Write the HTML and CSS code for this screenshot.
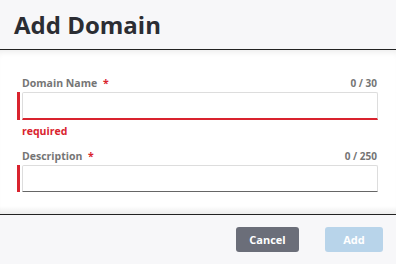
FILE: index.html
```html
<html>
<head>
<link rel="stylesheet" href="styles.css">
</head>
<body>
<div class="dialog">
    <div class="dialog-header">
        <h2>Add Domain</h2>
    </div>
    <div class="dialog-body">
        <div class="field invalid">
            <div class="field-top">
                <label for="domain-name">Domain Name <span class="req">*</span></label>
                <span class="counter">0 / 30</span>
            </div>
            <div class="input-wrap">
                <input type="text" id="domain-name">
            </div>
            <div class="error">required</div>
        </div>
        <div class="field">
            <div class="field-top">
                <label for="description">Description <span class="req">*</span></label>
                <span class="counter">0 / 250</span>
            </div>
            <div class="input-wrap">
                <input type="text" id="description">
            </div>
        </div>
    </div>
    <div class="dialog-footer">
        <button class="btn cancel">Cancel</button>
        <button class="btn add" disabled>Add</button>
    </div>
</div>
</body>
</html>
```

FILE: styles.css
```css
body {
    margin: 0;
    font-family: "Open Sans", "Noto Sans", sans-serif;
    color: #2b2d33;
    background: #fff;
}

.dialog {
    width: 396px;
    height: 264px;
    display: flex;
    flex-direction: column;
}

.dialog-header {
    height: 50px;
    background: #f7f7f9;
    border-bottom: 1px solid #222;
    box-sizing: border-box;
    padding: 0 14px;
    display: flex;
    align-items: center;
}

.dialog-header h2 {
    margin: 0;
    font-size: 24px;
    font-weight: 700;
    color: #2b2d33;
}

.dialog-body {
    flex: 1;
    padding: 26px 18px 0 17px;
    box-shadow: inset 0 6px 6px -4px rgba(0, 0, 0, 0.08);
    border-bottom: 1px solid #222;
    position: relative;
}

.dialog-body::after {
    content: "";
    position: absolute;
    left: 0;
    right: 0;
    bottom: 0;
    height: 8px;
    background: linear-gradient(to bottom, rgba(0, 0, 0, 0), rgba(0, 0, 0, 0.07));
}

.field-top {
    display: flex;
    justify-content: space-between;
    align-items: center;
    height: 14px;
    margin-bottom: 2px;
    padding-left: 5px;
}

label {
    font-size: 10.5px;
    font-weight: 700;
    color: #757575;
}

.req {
    color: #d9232e;
    margin-left: 3px;
}

.counter {
    font-size: 10px;
    font-weight: 700;
    color: #757575;
    padding-right: 1px;
}

.input-wrap {
    border-left: 3px solid #d9232e;
    padding-left: 2px;
    display: flex;
}

input[type='text'] {
    display: block;
    width: 100%;
    height: 27px;
    box-sizing: border-box;
    border: 1px solid #ddd;
    border-bottom: 1px solid #666;
    border-radius: 2px 2px 0 0;
    outline: none;
    font: 12px "Open Sans", sans-serif;
    padding: 4px 6px;
}

.invalid input[type='text'] {
    height: 28px;
    border-bottom: 2px solid #d9232e;
}

.error {
    font-size: 10.5px;
    font-weight: 700;
    color: #d9232e;
    margin: 4px 0 11px 0;
    padding-left: 5px;
}

.dialog-footer {
    height: 49px;
    background: #f7f7f9;
    display: flex;
    justify-content: flex-end;
    align-items: center;
    gap: 26px;
    padding: 0 13px 0 0;
}

.btn {
    height: 25px;
    border: none;
    border-radius: 3px;
    font-family: "Open Sans", sans-serif;
    font-size: 11px;
    font-weight: 700;
    color: #fff;
    cursor: pointer;
}

.cancel {
    width: 63px;
    background: #6b6e79;
}

.add {
    width: 58px;
    background: #b8d4ea;
}
```
